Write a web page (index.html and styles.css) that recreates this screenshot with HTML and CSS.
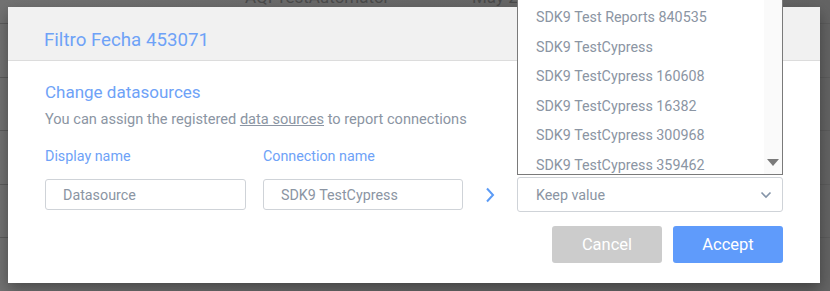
FILE: index.html
```html
<!DOCTYPE html>
<html>
<head>
<meta charset="utf-8">
<link rel="stylesheet" href="styles.css">
</head>
<body>
<div class="page">
  <div class="bg-table">
    <div class="bg-row"><span class="bg-name">AQI TestAutomator</span><span class="bg-date">May 23, 2023</span></div>
    <div class="bg-row"></div>
    <div class="bg-row"></div>
    <div class="bg-row"></div>
    <div class="bg-row"></div>
    <div class="bg-row"></div>
  </div>

  <div class="modal">
    <div class="modal-header">
      <h1 class="modal-title">Filtro Fecha 453071</h1>
    </div>
    <div class="modal-body">
      <h2 class="section-title">Change datasources</h2>
      <p class="section-desc">You can assign the registered <a class="link">data sources</a> to report connections</p>
      <div class="grid">
        <div class="label">Display name</div>
        <div class="label">Connection name</div>
        <div></div>
        <div></div>
        <div class="input">Datasource</div>
        <div class="input">SDK9 TestCypress</div>
        <div class="arrow">
          <svg width="10" height="16" viewBox="0 0 10 16"><path d="M2 1.5 L8 8 L2 14.5" fill="none" stroke="#5b9bf6" stroke-width="2"/></svg>
        </div>
        <div class="select-wrap">
          <div class="select">
            <span>Keep value</span>
            <svg class="caret" width="12" height="8" viewBox="0 0 12 8"><path d="M1.5 1.5 L6 6 L10.5 1.5" fill="none" stroke="#8494a8" stroke-width="1.6"/></svg>
          </div>
          <div class="dropdown">
            <ul class="options">
              <li>SDK9 Test Reports 840535</li>
              <li>SDK9 TestCypress</li>
              <li>SDK9 TestCypress 160608</li>
              <li>SDK9 TestCypress 16382</li>
              <li>SDK9 TestCypress 300968</li>
              <li>SDK9 TestCypress 359462</li>
            </ul>
            <div class="scrollbar">
              <svg class="scroll-down" width="12" height="8" viewBox="0 0 12 8"><path d="M0 0 L12 0 L6 7 Z" fill="#7a7a7a"/></svg>
            </div>
          </div>
        </div>
      </div>
      <div class="actions">
        <button class="btn btn-cancel">Cancel</button>
        <button class="btn btn-accept">Accept</button>
      </div>
    </div>
  </div>
</div>
</body>
</html>
```
FILE: styles.css
```css
* { box-sizing: border-box; }
html, body {
  margin: 0;
  padding: 0;
  width: 830px;
  height: 291px;
  overflow: hidden;
  background: #6b6b6b;
  font-family: Roboto, "Liberation Sans", sans-serif;
}
.page {
  position: relative;
  display: flow-root;
  width: 830px;
  height: 291px;
  overflow: hidden;
  background: linear-gradient(90deg, #727272 0%, #686868 50%, #646464 100%);
}
.bg-table {
  margin-top: -29.5px;
}
.bg-row {
  height: 53.5px;
  border-bottom: 1px solid #5c5c5c;
  display: flex;
  align-items: center;
  font-size: 17px;
  color: #4a4a4a;
}
.bg-name { margin-left: 245px; width: 227px; }

.modal {
  position: absolute;
  left: 8px;
  top: 7px;
  width: 812px;
  height: 276px;
  background: #fff;
  box-shadow: 0 6px 14px rgba(0,0,0,0.35);
}
.modal-header {
  height: 54px;
  background: #f1f1f1;
  border-bottom: 1px solid #dcdcdc;
  padding: 22px 36px 0;
}
.modal-title {
  margin: 0;
  font-size: 18.7px;
  line-height: 22px;
  font-weight: 400;
  color: #6ea2f7;
}
.modal-body {
  padding: 20px 37px 0;
}
.section-title {
  margin: 0;
  font-size: 17px;
  line-height: 22px;
  font-weight: 400;
  color: #6ea2f7;
}
.section-desc {
  margin: 7px 0 0;
  font-size: 14.6px;
  line-height: 18px;
  color: #8b95a3;
}
.link {
  color: #8b95a3;
  text-decoration: underline;
}
.grid {
  margin-top: 19px;
  display: grid;
  grid-template-columns: 218px 200px 54px 266px;
  align-items: center;
}
.label {
  font-size: 14.3px;
  line-height: 18px;
  color: #6ea2f7;
  margin-bottom: 12px;
}
.input {
  width: 201px;
  height: 31px;
  border: 1px solid #cfd3d8;
  border-radius: 3px;
  padding: 0 17px;
  display: flex;
  align-items: center;
  font-size: 14.3px;
  color: #8b95a3;
}
.grid > .input + .input { width: 200px; }
.arrow {
  display: flex;
  padding-left: 22px;
  align-items: center;
}
.select-wrap {
  position: relative;
}
.select {
  height: 35px;
  border: 1px solid #cfd3d8;
  border-radius: 3px;
  padding: 0 10px 0 18px;
  display: flex;
  align-items: center;
  justify-content: space-between;
  font-size: 14.3px;
  color: #8b95a3;
}
.dropdown {
  position: absolute;
  left: 0;
  bottom: calc(100% + 2px);
  width: 266px;
  height: 188px;
  border: 1px solid #7a7a7a;
  background: #fff;
  overflow: hidden;
  display: flex;
}
.options {
  list-style: none;
  margin: 0;
  padding: 15px 0 0;
  flex: 1;
}
.options li {
  height: 29.6px;
  line-height: 29.6px;
  padding-left: 18px;
  font-size: 14.3px;
  color: #8b95a3;
  white-space: nowrap;
}
.scrollbar {
  width: 18px;
  background: #fafafa;
  position: relative;
}
.scroll-down {
  position: absolute;
  left: 3px;
  bottom: 7px;
}
.actions {
  margin-top: 14px;
  display: flex;
  justify-content: flex-end;
  gap: 11px;
}
.btn {
  width: 110px;
  height: 37px;
  border: none;
  border-radius: 3px;
  font-family: Roboto, "Liberation Sans", sans-serif;
  font-size: 16.5px;
  color: #fff;
}
.btn-cancel { background: #cccccc; }
.btn-accept { background: #5f9bfb; }
```
